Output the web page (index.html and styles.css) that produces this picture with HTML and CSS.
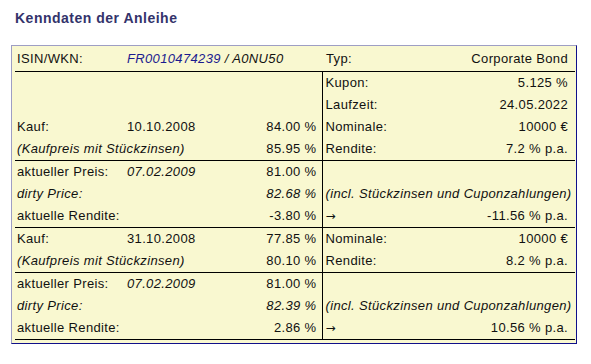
FILE: index.html
```html
<!DOCTYPE html>
<html>
<head>
<meta charset="utf-8">
<link rel="stylesheet" href="styles.css">
</head>
<body>
<div class="page">
  <h2 class="title">Kenndaten der Anleihe</h2>
  <div class="box">
    <table class="data">
      <colgroup>
        <col class="c-label"><col class="c-date"><col class="c-val"><col class="c-rlabel"><col class="c-rval">
      </colgroup>
      <tr class="head">
        <td>ISIN/WKN:</td>
        <td colspan="2" class="it"><span class="link">FR0010474239</span> / A0NU50</td>
        <td class="rl nodiv">Typ:</td>
        <td class="rv">Corporate Bond</td>
      </tr>
      <tr>
        <td></td><td></td><td class="v"></td>
        <td class="rl">Kupon:</td><td class="rv">5.125 %</td>
      </tr>
      <tr>
        <td></td><td></td><td class="v"></td>
        <td class="rl">Laufzeit:</td><td class="rv">24.05.2022</td>
      </tr>
      <tr>
        <td>Kauf:</td><td>10.10.2008</td><td class="v">84.00 %</td>
        <td class="rl">Nominale:</td><td class="rv">10000 €</td>
      </tr>
      <tr class="end">
        <td colspan="2" class="it">(Kaufpreis mit Stückzinsen)</td><td class="v">85.95 %</td>
        <td class="rl">Rendite:</td><td class="rv">7.2 % p.a.</td>
      </tr>
      <tr>
        <td>aktueller Preis:</td><td class="it">07.02.2009</td><td class="v">81.00 %</td>
        <td class="rl"></td><td class="rv"></td>
      </tr>
      <tr>
        <td class="it">dirty Price:</td><td></td><td class="v it">82.68 %</td>
        <td colspan="2" class="rl it">(incl. Stückzinsen und Cuponzahlungen)</td>
      </tr>
      <tr class="end">
        <td colspan="2">aktuelle Rendite:</td><td class="v">-3.80 %</td>
        <td class="rl"><span class="arrow">→</span></td><td class="rv">-11.56 % p.a.</td>
      </tr>
      <tr>
        <td>Kauf:</td><td>31.10.2008</td><td class="v">77.85 %</td>
        <td class="rl">Nominale:</td><td class="rv">10000 €</td>
      </tr>
      <tr class="end">
        <td colspan="2" class="it">(Kaufpreis mit Stückzinsen)</td><td class="v">80.10 %</td>
        <td class="rl">Rendite:</td><td class="rv">8.2 % p.a.</td>
      </tr>
      <tr>
        <td>aktueller Preis:</td><td class="it">07.02.2009</td><td class="v">81.00 %</td>
        <td class="rl"></td><td class="rv"></td>
      </tr>
      <tr>
        <td class="it">dirty Price:</td><td></td><td class="v it">82.39 %</td>
        <td colspan="2" class="rl it">(incl. Stückzinsen und Cuponzahlungen)</td>
      </tr>
      <tr class="end">
        <td colspan="2">aktuelle Rendite:</td><td class="v">2.86 %</td>
        <td class="rl"><span class="arrow">→</span></td><td class="rv">10.56 % p.a.</td>
      </tr>
    </table>
  </div>
</div>
</body>
</html>
```

FILE: styles.css
```css
html, body {
  margin: 0;
  padding: 0;
  background: #ffffff;
}

.page {
  padding: 10px 14px 0 11px;
  font-family: "Liberation Sans", Arial, sans-serif;
}

.title {
  margin: 0 0 0 4px;
  font-size: 14px;
  line-height: 17px;
  font-weight: bold;
  color: #33336b;
  letter-spacing: 0.5px;
}

.box {
  margin-top: 18px;
  background: #f9f8d0;
  border-style: solid;
  border-width: 1px;
  border-color: #9e9ec4 #10108a #10108a #9e9ec4;
  padding: 1px 1px 3px 3px;
}

.data {
  width: 560px;
  border-collapse: collapse;
  table-layout: fixed;
  font-size: 13px;
  color: #111;
  letter-spacing: 0.35px;
}

.c-label { width: 110px; }
.c-date { width: 120px; }
.c-val { width: 77px; }
.c-rlabel { width: 130px; }
.c-rval { width: 123px; }

.data td {
  height: 22px;
  padding: 0 5px 0 2px;
  line-height: 16px;
  white-space: nowrap;
  vertical-align: middle;
}

.data tr.head td {
  height: 24px;
  border-bottom: 1px solid #000;
}

.data tr.end td {
  border-bottom: 1px solid #000;
}

.data tr:last-child td {
  border-bottom: 1px solid #000;
}

.data td.v {
  text-align: right;
}

.data td.rl {
  border-left: 1px solid #000;
  padding-left: 3px;
}

.data tr.head td.rl.nodiv {
  border-left: none;
  padding-left: 4px;
}

.data td.rv {
  text-align: right;
  padding-right: 7px;
}

.it {
  font-style: italic;
}

.link {
  color: #1b1b8f;
}

.arrow {
  font-family: "DejaVu Sans", sans-serif;
  font-size: 12px;
}
```
